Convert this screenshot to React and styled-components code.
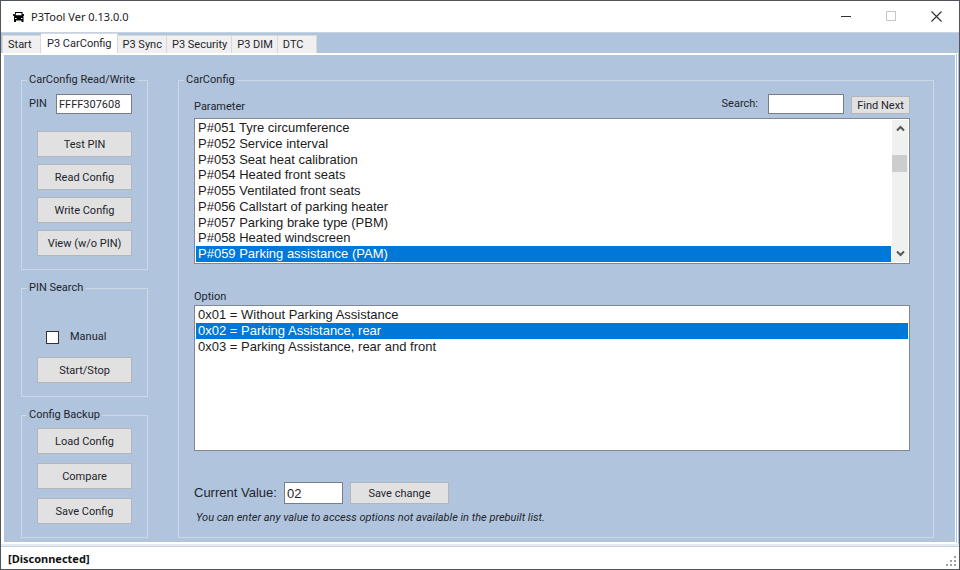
import React, { useState } from "react";
import styled, { createGlobalStyle } from "styled-components";

const GlobalStyle = createGlobalStyle`
  * {
    box-sizing: border-box;
  }
  body {
    margin: 0;
    background: #fff;
    font-family: Roboto, "Liberation Sans", sans-serif;
    font-size: 11px;
    line-height: 14px;
    color: #1f242b;
  }
  button,
  input {
    font: inherit;
    color: inherit;
  }
`;

const Window = styled.div`
  min-height: 100vh;
  display: flex;
  flex-direction: column;
  background: #b0c4de;
  border: 1px solid #50555b;
`;

const TitleBar = styled.header`
  display: flex;
  align-items: center;
  height: 31px;
  padding-left: 11px;
  background: #fff;
`;

const Title = styled.h1`
  flex: 1;
  margin: 0 0 0 6px;
  font-family: "Noto Sans", "Open Sans", sans-serif;
  font-size: 11px;
  font-weight: 400;
  color: #222;
`;

const CaptionButton = styled.button`
  display: flex;
  align-items: center;
  justify-content: center;
  width: 45px;
  height: 30px;
  padding: 0;
  border: 0;
  background: none;
  color: #333;

  &:disabled {
    color: #c4c4c4;
  }
`;

const Tabs = styled.nav`
  display: flex;
  align-items: flex-end;
  height: 21px;
  padding-left: 1px;
  border-top: 1px solid #c6d3e4;
`;

const Tab = styled.button`
  height: ${({ $active }) => ($active ? "20px" : "18px")};
  min-width: 39px;
  padding: ${({ $active }) => ($active ? "0 5px 0 6px" : "1px 4px 0 5px")};
  border: 1px solid #d9d9d9;
  border-left-width: ${({ $first }) => ($first ? "1px" : "0")};
  border-bottom: 0;
  background: ${({ $active }) => ($active ? "#fff" : "#f0f0f0")};
  text-align: left;
  white-space: nowrap;
`;

const Page = styled.main`
  flex: 1;
  display: flex;
  gap: 30px;
  margin: 0 1px 0 0;
  padding: 18px 21px 4px 17px;
  border: 2px solid #fff;
  border-right: 3px double #fff;
  border-left-width: 3px;
`;

const SideColumn = styled.div`
  flex: none;
  width: 127px;
  display: flex;
  flex-direction: column;
  gap: 11px;
`;

const Group = styled.fieldset`
  min-width: 0;
  margin: 0;
  padding: 0 15px 13px;
  border: 1px solid #cbd8e8;
`;

const SideGroup = styled(Group)`
  flex: ${({ $grow }) => ($grow ? "1" : "none")};
`;

const MainGroup = styled(Group)`
  flex: 1;
  padding: 0 23px 10px 15px;
`;

const Legend = styled.legend`
  height: 14px;
  margin-left: -10px;
  padding: 0 2px;
  white-space: nowrap;
`;

const Button = styled.button`
  height: 26px;
  padding: 1px 8px 0;
  border: 1px solid #b3b5b8;
  background: #e1e1e1;
  white-space: nowrap;

  &:hover {
    border-color: #0078d7;
    background: #e5f1fb;
  }
`;

const SmallButton = styled(Button)`
  align-self: flex-end;
  width: 59px;
  height: 18px;
  padding: 1px 0 0;
`;

const SaveButton = styled(Button)`
  width: 99px;
  height: 22px;
`;

const ButtonStack = styled.div`
  display: flex;
  flex-direction: column;
  gap: ${({ $gap }) => $gap}px;
  padding-top: ${({ $top }) => $top}px;
`;

const TextBox = styled.input`
  width: 76px;
  height: 20px;
  padding: 0 2px;
  border: 1px solid #7a7f87;
  border-radius: 0;
  background: #fff;
`;

const ValueBox = styled(TextBox)`
  width: 59px;
  height: 22px;
  font-family: "Liberation Sans", Arial, sans-serif;
  font-size: 13px;
`;

const PinRow = styled.div`
  display: flex;
  align-items: center;
  justify-content: space-between;
  margin-left: -8px;
  padding-top: 7px;
`;

const CheckRow = styled.div`
  display: flex;
  align-items: center;
  gap: 11px;
  padding: 35px 0 0 9px;
`;

const CheckBox = styled.input`
  appearance: none;
  width: 13px;
  height: 13px;
  margin: 0;
  border: 1px solid #333;
  background: #fff;

  &:checked {
    background: #0078d7;
    box-shadow: inset 0 0 0 2px #fff;
  }
`;

const SearchRow = styled.div`
  display: flex;
  align-items: flex-end;
  padding-top: 7px;
`;

const SearchArea = styled.div`
  display: flex;
  align-items: center;
  gap: 7px;
  margin-left: auto;
`;

const SearchLabel = styled.label`
  margin-right: 3px;
`;

const ListFrame = styled.div`
  display: flex;
  height: 146px;
  margin-top: ${({ $top }) => $top}px;
  padding: 1px;
  border: 1px solid #828790;
  background: #fff;
`;

const List = styled.ul`
  flex: 1;
  display: grid;
  grid-template-rows: repeat(9, 1fr);
  margin: 0;
  padding: 0;
  list-style: none;
  font-family: "Liberation Sans", Arial, sans-serif;
  font-size: 13px;
  line-height: 14px;
`;

const Item = styled.li`
  padding: 1px 2px 0;
  color: ${({ $selected }) => ($selected ? "#fff" : "#1c1c1c")};
  background: ${({ $selected }) => ($selected ? "#0078d7" : "transparent")};
  white-space: nowrap;
  cursor: default;
`;

const ScrollBar = styled.div`
  display: flex;
  flex-direction: column;
  width: 17px;
  background: #f0f0f0;
  border: 0 solid #fff;
  border-width: 0 0 0 1px;
`;

const ScrollArrow = styled.button`
  display: flex;
  align-items: center;
  justify-content: center;
  height: 17px;
  padding: 0;
  border: 0;
  background: none;
`;

const ScrollTrack = styled.div`
  flex: 1;
  padding-top: 18px;
`;

const ScrollThumb = styled.div`
  width: 15px;
  height: 17px;
  background: #cdcdcd;
`;

const OptionLabel = styled.div`
  margin-top: 26px;
`;

const ValueRow = styled.div`
  display: flex;
  align-items: center;
  gap: 7px;
  margin-top: 31px;
`;

const ValueLabel = styled.label`
  width: 83px;
  font-family: "Liberation Sans", Arial, sans-serif;
  font-size: 13px;
  white-space: nowrap;
`;

const Hint = styled.p`
  margin: 7px 0 0 2px;
  font-style: italic;
`;

const StatusBar = styled.footer`
  display: flex;
  align-items: center;
  justify-content: space-between;
  height: 25px;
  padding: 2px 3px 0 7px;
  border-top: 2px solid #e6e9ed;
  background: #fff;
  box-shadow: inset 0 1px 0 #c3d3e6;
  font-family: "Noto Sans", "Open Sans", sans-serif;
  font-weight: 700;
  color: #111;
`;

const Grip = styled.svg`
  align-self: flex-end;
  margin-bottom: 3px;
`;

const tabs = ["Start", "P3 CarConfig", "P3 Sync", "P3 Security", "P3 DIM", "DTC"];

const parameters = [
  "P#051 Tyre circumference",
  "P#052 Service interval",
  "P#053 Seat heat calibration",
  "P#054 Heated front seats",
  "P#055 Ventilated front seats",
  "P#056 Callstart of parking heater",
  "P#057 Parking brake type (PBM)",
  "P#058 Heated windscreen",
  "P#059 Parking assistance (PAM)",
];

const options = [
  "0x01 = Without Parking Assistance",
  "0x02 = Parking Assistance, rear",
  "0x03 = Parking Assistance, rear and front",
];

const CarIcon = () => (
  <svg width="13" height="12" viewBox="0 0 13 12" aria-hidden="true">
    <path
      fill="#000"
      fillRule="evenodd"
      d="M3 1h7.500v2l1.500.3v1.500l-.8.200.3 1V11H9.500V9.500H4V11H2V6l.3-1L1 4.800V3.300L3 3zM4 2l-.4 2.300h6.100L9.300 2zM3 7v1h1.500V7zm6 0v1h1.500V7z"
    />
  </svg>
);

const Arrow = ({ down }) => (
  <svg width="9" height="7" viewBox="0 0 9 7" aria-hidden="true">
    <path
      d={down ? "M1 1.500 4.500 5 8 1.500" : "M1 5.500 4.500 2 8 5.500"}
      fill="none"
      stroke="#555"
      strokeWidth="2"
    />
  </svg>
);

const ListBox = ({ label, items, selected, onSelect }) => (
  <List role="listbox" aria-label={label}>
    {items.map((item, index) => (
      <Item
        key={item}
        role="option"
        aria-selected={index === selected}
        $selected={index === selected}
        onClick={() => onSelect(index)}
      >
        {item}
      </Item>
    ))}
  </List>
);

const App = () => {
  const [tab, setTab] = useState(1);
  const [parameter, setParameter] = useState(8);
  const [option, setOption] = useState(1);
  const [value, setValue] = useState("02");

  const selectOption = (index) => {
    setOption(index);
    setValue(options[index].slice(2, 4));
  };

  return (
    <>
      <GlobalStyle />
      <Window>
        <TitleBar>
          <CarIcon />
          <Title>P3Tool Ver 0.13.0.0</Title>
          <CaptionButton aria-label="Minimize">
            <svg width="11" height="11" viewBox="0 0 11 11">
              <path d="M0 5.500h10" stroke="currentColor" />
            </svg>
          </CaptionButton>
          <CaptionButton aria-label="Maximize" disabled>
            <svg width="11" height="11" viewBox="0 0 11 11">
              <path d="M.5.500h9v9h-9z" fill="none" stroke="currentColor" />
            </svg>
          </CaptionButton>
          <CaptionButton aria-label="Close">
            <svg width="11" height="11" viewBox="0 0 11 11">
              <path d="m.5.500 10 10m0-10-10 10" stroke="currentColor" strokeWidth="1.200" />
            </svg>
          </CaptionButton>
        </TitleBar>

        <Tabs>
          {tabs.map((name, index) => (
            <Tab key={name} $first={index === 0} $active={index === tab} onClick={() => setTab(index)}>
              {name}
            </Tab>
          ))}
        </Tabs>

        <Page>
          <SideColumn>
            <SideGroup>
              <Legend>CarConfig Read/Write</Legend>
              <PinRow>
                <label htmlFor="pin">PIN</label>
                <TextBox id="pin" defaultValue="FFFF307608" />
              </PinRow>
              <ButtonStack $top={17} $gap={7}>
                <Button>Test PIN</Button>
                <Button>Read Config</Button>
                <Button>Write Config</Button>
                <Button>View (w/o PIN)</Button>
              </ButtonStack>
            </SideGroup>
            <SideGroup>
              <Legend>PIN Search</Legend>
              <CheckRow>
                <CheckBox type="checkbox" id="manual" />
                <label htmlFor="manual">Manual</label>
              </CheckRow>
              <ButtonStack $top={13} $gap={7}>
                <Button>Start/Stop</Button>
              </ButtonStack>
            </SideGroup>
            <SideGroup $grow>
              <Legend>Config Backup</Legend>
              <ButtonStack $top={6} $gap={9}>
                <Button>Load Config</Button>
                <Button>Compare</Button>
                <Button>Save Config</Button>
              </ButtonStack>
            </SideGroup>
          </SideColumn>

          <MainGroup>
            <Legend>CarConfig</Legend>
            <SearchRow>
              <span>Parameter</span>
              <SearchArea>
                <SearchLabel htmlFor="search">Search:</SearchLabel>
                <TextBox id="search" />
                <SmallButton>Find Next</SmallButton>
              </SearchArea>
            </SearchRow>
            <ListFrame $top={4}>
              <ListBox label="Parameter" items={parameters} selected={parameter} onSelect={setParameter} />
              <ScrollBar>
                <ScrollArrow aria-label="Scroll up">
                  <Arrow />
                </ScrollArrow>
                <ScrollTrack>
                  <ScrollThumb />
                </ScrollTrack>
                <ScrollArrow aria-label="Scroll down">
                  <Arrow down />
                </ScrollArrow>
              </ScrollBar>
            </ListFrame>

            <OptionLabel>Option</OptionLabel>
            <ListFrame $top={1}>
              <ListBox label="Option" items={options} selected={option} onSelect={selectOption} />
            </ListFrame>

            <ValueRow>
              <ValueLabel htmlFor="value">Current Value:</ValueLabel>
              <ValueBox id="value" value={value} onChange={(e) => setValue(e.target.value)} />
              <SaveButton>Save change</SaveButton>
            </ValueRow>
            <Hint>You can enter any value to access options not available in the prebuilt list.</Hint>
          </MainGroup>
        </Page>

        <StatusBar>
          <span>[Disconnected]</span>
          <Grip width="10" height="10" viewBox="0 0 10 10" aria-hidden="true">
            <path
              fill="#a0a0a0"
              d="M8 0h2v2H8zM4 4h2v2H4zM8 4h2v2H8zM0 8h2v2H0zM4 8h2v2H4zM8 8h2v2H8z"
            />
          </Grip>
        </StatusBar>
      </Window>
    </>
  );
};

export default App;
